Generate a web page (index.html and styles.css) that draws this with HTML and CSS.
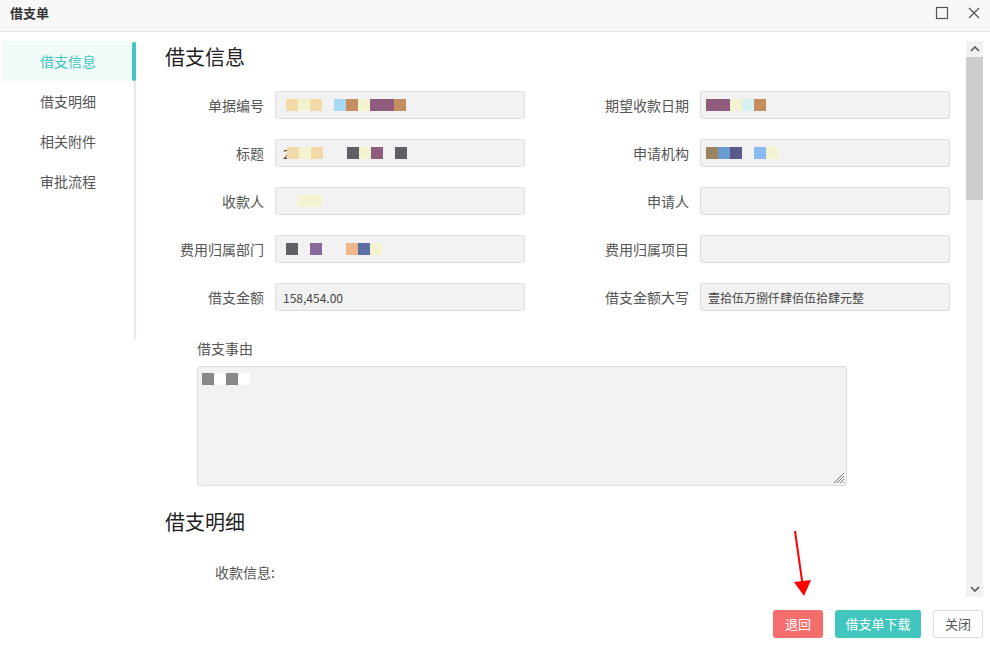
FILE: index.html
```html
<!DOCTYPE html>
<html lang="zh">
<head>
<meta charset="utf-8">
<title>借支单</title>
<link rel="stylesheet" href="styles.css">
</head>
<body>
<div class="dialog">
  <header class="dlg-head">
    <span class="dlg-title">借支单</span>
    <div class="dlg-tools">
      <svg class="tool" width="14" height="14" viewBox="0 0 14 14"><rect x="1.5" y="1.5" width="11" height="11" fill="none" stroke="#555" stroke-width="1.2"/></svg>
      <svg class="tool" width="12" height="12" viewBox="0 0 12 12"><path d="M1 1L11 11M11 1L1 11" stroke="#555" stroke-width="1.3" fill="none"/></svg>
    </div>
  </header>

  <div class="dlg-body">
    <nav class="side-nav">
      <a class="nav-item active">借支信息</a>
      <a class="nav-item">借支明细</a>
      <a class="nav-item">相关附件</a>
      <a class="nav-item">审批流程</a>
    </nav>

    <main class="content">
      <h2 class="sec-title">借支信息</h2>
      <div class="form-grid">
        <div class="field">
          <label>单据编号</label>
          <div class="input"><span class="m tan"></span><span class="m yel"></span><span class="m tan"></span><span class="m gap"></span><span class="m lblue"></span><span class="m brn"></span><span class="m yel"></span><span class="m pur"></span><span class="m pur"></span><span class="m brn"></span></div>
        </div>
        <div class="field">
          <label>期望收款日期</label>
          <div class="input"><span class="m pur"></span><span class="m pur"></span><span class="m yel"></span><span class="m cyan"></span><span class="m brn"></span></div>
        </div>
        <div class="field">
          <label>标题</label>
          <div class="input txt"><span class="ch">2</span><span class="m tan"></span><span class="m yel"></span><span class="m tan"></span><span class="m gap"></span><span class="m gap"></span><span class="m dgr"></span><span class="m yel"></span><span class="m pur"></span><span class="m gap"></span><span class="m dgr"></span></div>
        </div>
        <div class="field">
          <label>申请机构</label>
          <div class="input"><span class="m kha"></span><span class="m mblue"></span><span class="m navy"></span><span class="m gap"></span><span class="m sky"></span><span class="m yel"></span></div>
        </div>
        <div class="field">
          <label>收款人</label>
          <div class="input"><span class="m gap"></span><span class="m yel"></span><span class="m yel"></span></div>
        </div>
        <div class="field">
          <label>申请人</label>
          <div class="input"></div>
        </div>
        <div class="field">
          <label>费用归属部门</label>
          <div class="input"><span class="m dgr"></span><span class="m gap"></span><span class="m vio"></span><span class="m gap"></span><span class="m gap"></span><span class="m sal"></span><span class="m slate"></span><span class="m yel"></span></div>
        </div>
        <div class="field">
          <label>费用归属项目</label>
          <div class="input"></div>
        </div>
        <div class="field">
          <label>借支金额</label>
          <div class="input txt">158,454.00</div>
        </div>
        <div class="field">
          <label>借支金额大写</label>
          <div class="input txt">壹拾伍万捌仟肆佰伍拾肆元整</div>
        </div>
      </div>

      <div class="reason">
        <div class="reason-label">借支事由</div>
        <div class="textarea">
          <div class="ta-text"><span class="m gry"></span><span class="m gap wht"></span><span class="m gry"></span><span class="m gap wht"></span></div>
          <svg class="grip" width="14" height="14" viewBox="0 0 14 14"><path d="M13 3L3 13M13 6L6 13M13 9L9 13M13 12L12 13" stroke="#777" stroke-width="1" fill="none"/></svg>
        </div>
      </div>

      <h2 class="sec-title sec-two">借支明细</h2>
      <div class="sub-label">收款信息:</div>
    </main>

    <div class="scrollbar">
      <div class="sb-btn"><svg width="10" height="6" viewBox="0 0 10 6"><path d="M1 5L5 1L9 5" stroke="#555" stroke-width="1.6" fill="none"/></svg></div>
      <div class="sb-thumb"></div>
      <div class="sb-track"></div>
      <div class="sb-btn"><svg width="10" height="6" viewBox="0 0 10 6"><path d="M1 1L5 5L9 1" stroke="#555" stroke-width="1.6" fill="none"/></svg></div>
    </div>
  </div>

  <footer class="dlg-foot">
    <button class="btn btn-red">退回</button>
    <button class="btn btn-teal">借支单下载</button>
    <button class="btn btn-plain">关闭</button>
  </footer>

  <svg class="annot-arrow" width="30" height="70" viewBox="0 0 30 70">
    <path d="M5 1L12.5 54" stroke="#f00" stroke-width="2" fill="none"/>
    <path d="M4 52L21 50L14 66Z" fill="#f00"/>
  </svg>
</div>
</body>
</html>
```
FILE: styles.css
```css
* { box-sizing: border-box; }
html, body { margin: 0; padding: 0; }
body {
  width: 990px;
  height: 648px;
  overflow: hidden;
  background: #fff;
  font-family: "Noto Sans CJK SC", "Noto Sans", "Liberation Sans", sans-serif;
  color: #333;
}
.dialog {
  position: relative;
  width: 990px;
  height: 648px;
  display: flex;
  flex-direction: column;
}
.dlg-head {
  height: 32px;
  flex: none;
  background: #f8f8f8;
  border-bottom: 1px solid #e4e4ec;
  display: flex;
  align-items: center;
  justify-content: space-between;
  padding: 0 10px 0 10px;
}
.dlg-title {
  font-size: 13px;
  font-weight: bold;
  color: #333;
  line-height: 20px;
  margin-top: -6px;
}
.dlg-tools {
  display: flex;
  align-items: center;
  gap: 19px;
  margin-top: -6px;
}
.tool { display: block; }

.dlg-body {
  flex: none;
  height: 568px;
  display: flex;
  padding: 9px 7px 0 2px;
}
.side-nav {
  width: 134px;
  height: 298px;
  flex: none;
  border-right: 2px solid #e8e8ee;
  display: flex;
  flex-direction: column;
}
.nav-item {
  position: relative;
  height: 40px;
  line-height: 40px;
  padding-left: 38px;
  font-size: 14px;
  color: #555;
  margin-right: 1px;
}
.nav-item.active {
  background: #f0fbfa;
  color: #40c6bc;
}
.nav-item.active::after {
  content: "";
  position: absolute;
  right: -3px;
  top: 1px;
  width: 4px;
  height: 39px;
  border-radius: 2px;
  background: #40c6bc;
}

.content {
  flex: 1;
  height: 556px;
  overflow: hidden;
  padding-left: 29px;
}
.sec-title {
  margin: 0;
  font-size: 20px;
  font-weight: normal;
  line-height: 32px;
  color: #222;
}
.form-grid {
  margin-top: 18px;
  display: grid;
  grid-template-columns: 360px 361px;
  column-gap: 64px;
  row-gap: 20px;
}
.field {
  display: flex;
  align-items: center;
  height: 28px;
}
.field label {
  width: 99px;
  flex: none;
  text-align: right;
  font-size: 14px;
  color: #555;
  margin-right: 11px;
}
.field:nth-child(2n) label { width: 100px; }
.input {
  width: 250px;
  height: 28px;
  flex: none;
  background: #f2f2f2;
  border: 1px solid #dcdce4;
  border-radius: 3px;
  padding: 0 7px 0 10px;
  display: flex;
  align-items: center;
  font-size: 12px;
  color: #444;
}
.field:nth-child(2n) .input { padding-left: 5px; }
.input.txt, .field:nth-child(2n) .input.txt { padding-left: 7px; }
.m { width: 12px; height: 12px; flex: none; display: inline-block; }
.ch { font-size: 12px; margin-right: -3px; }
.gap { background: transparent; }
.wht { background: #fff; }
.tan { background: #f3d9a8; }
.yel { background: #f3f3d2; }
.lblue { background: #a8d8f2; }
.brn { background: #c48e60; }
.pur { background: #905c7e; }
.dgr { background: #5f6064; }
.vio { background: #8a6a9c; }
.sal { background: #f0b88a; }
.slate { background: #5a70a2; }
.kha { background: #9c8460; }
.mblue { background: #6a9cd2; }
.navy { background: #5a5a8a; }
.sky { background: #8abaf2; }
.cyan { background: #d8f2f2; }
.gry { background: #888; }

.reason {
  margin-top: 27px;
  margin-left: 32px;
}
.reason-label {
  font-size: 14px;
  line-height: 20px;
  color: #555;
}
.textarea {
  position: relative;
  margin-top: 8px;
  width: 650px;
  height: 120px;
  background: #f2f2f2;
  border: 1px solid #dcdce4;
  border-radius: 3px;
}
.ta-text {
  display: flex;
  padding: 6px 0 0 4px;
}
.grip {
  position: absolute;
  right: 1px;
  bottom: 1px;
}
.sec-two { margin-top: 20px; }
.sub-label {
  margin-top: 24px;
  margin-left: 50px;
  font-size: 14px;
  line-height: 20px;
  color: #555;
}

.scrollbar {
  width: 17px;
  height: 556px;
  flex: none;
  background: #f1f1f1;
  display: flex;
  flex-direction: column;
}
.sb-btn {
  height: 16px;
  display: flex;
  align-items: center;
  justify-content: center;
}
.sb-thumb {
  height: 143px;
  background: #cdcdcd;
}
.sb-track { flex: 1; }

.dlg-foot {
  flex: 1;
  display: flex;
  justify-content: flex-end;
  align-items: center;
  gap: 12px;
  padding: 0 7px 0 0;
}
.btn {
  height: 28px;
  border-radius: 3px;
  font-family: inherit;
  font-size: 13px;
  border: 1px solid transparent;
  padding: 0;
  line-height: 26px;
}
.btn-red { width: 50px; background: #f46e6e; color: #fff; }
.btn-teal { width: 86px; background: #40c6bc; color: #fff; }
.btn-plain { width: 50px; background: #fff; color: #555; border-color: #dcdce4; }

.annot-arrow {
  position: absolute;
  left: 790px;
  top: 530px;
}
```
